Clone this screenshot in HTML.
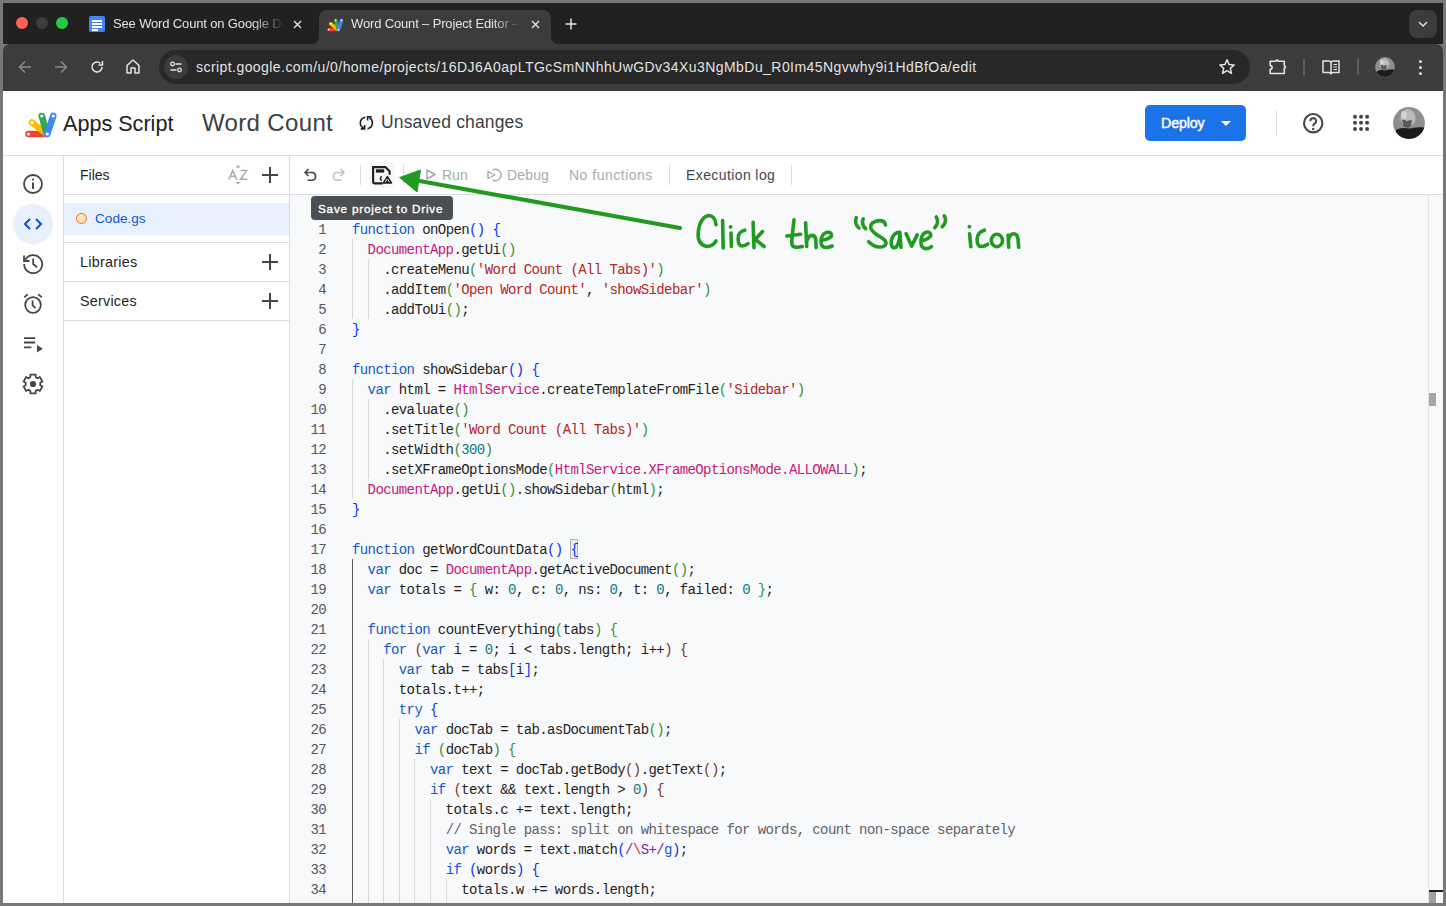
<!DOCTYPE html>
<html><head><meta charset="utf-8">
<style>
*{box-sizing:border-box;margin:0;padding:0}
html,body{width:1446px;height:906px;overflow:hidden;background:#797777;font-family:"Liberation Sans",sans-serif;position:relative}
.a{position:absolute}
.t{position:absolute;white-space:nowrap;line-height:1}
svg{position:absolute;overflow:visible}
.code{font-family:"Liberation Mono",monospace;font-size:14px;letter-spacing:-0.6px;color:#1f1f1f}
.ln{position:absolute;width:40px;text-align:right;color:#55585c;line-height:20px;padding-top:1px}
.row{position:absolute;left:352px;white-space:pre;line-height:20px;padding-top:1px}
.k{color:#1557c9}
.c{color:#c4187c}
.s{color:#b3261e}
.n{color:#0b7a85}
.b1{color:#0431fa}
.b2{color:#319331}
.b3{color:#7b3814}
.cm{color:#5f6368}
.rx{color:#7b1fb0}
.rs{color:#d1242f}
.g{position:absolute;width:1px;background:#d9d9d9}
.ga{background:#5b5b5b}
</style></head><body>
<!-- CHROME -->
<div class="a" style="left:3px;top:3px;width:1440px;height:41px;background:#202121"></div>
<div class="a" style="left:3px;top:44px;width:1440px;height:47px;background:#3c3c3c;border-radius:7px 7px 0 0"></div>
<!-- traffic lights -->
<div class="a" style="left:16px;top:17px;width:12px;height:12px;border-radius:50%;background:#fe5f57"></div>
<div class="a" style="left:36px;top:17px;width:12px;height:12px;border-radius:50%;background:#3d3d3d"></div>
<div class="a" style="left:56px;top:17px;width:12px;height:12px;border-radius:50%;background:#28c840"></div>
<!-- inactive tab -->
<div class="a" style="left:89px;top:16px;width:16px;height:16px;border-radius:2px;background:#4285f4"></div>
<div class="a" style="left:92px;top:20px;width:10px;height:1.5px;background:#fff"></div>
<div class="a" style="left:92px;top:23px;width:10px;height:1.5px;background:#fff"></div>
<div class="a" style="left:92px;top:26px;width:10px;height:1.5px;background:#fff"></div>
<div class="a" style="left:92px;top:29px;width:6px;height:1.5px;background:#fff"></div>
<div class="t" style="left:113px;top:17px;font-size:13px;letter-spacing:-0.15px;color:#e3e3e3;width:172px;overflow:hidden;-webkit-mask-image:linear-gradient(90deg,#000 80%,transparent)">See Word Count on Google Docs</div>
<svg style="left:293px;top:20px" width="9" height="9" viewBox="0 0 9 9"><path d="M1 1L8 8M8 1L1 8" stroke="#e3e3e3" stroke-width="1.4"/></svg>
<!-- active tab -->
<div class="a" style="left:319px;top:10px;width:232px;height:34px;background:#3c3c3c;border-radius:8px 8px 0 0"></div>
<div class="a" style="left:311px;top:36px;width:8px;height:8px;background:radial-gradient(circle at 0 0,#202121 8px,#3c3c3c 8.5px)"></div>
<div class="a" style="left:551px;top:36px;width:8px;height:8px;background:radial-gradient(circle at 100% 0,#202121 8px,#3c3c3c 8.5px)"></div>
<svg style="left:327px;top:18px" width="17" height="14" viewBox="0 0 33 26">
 <g stroke-linecap="round" stroke-width="6.6" fill="none">
  <path d="M3.5 22H20" stroke="#ea4335"/><path d="M7 10.5L20.5 21" stroke="#fbbc04"/><path d="M16.8 4L21.5 21" stroke="#34a853"/><path d="M28.2 4L22.3 22" stroke="#4285f4"/>
 </g><g fill="#fff"><circle cx="3.5" cy="22" r="1.6"/><circle cx="7" cy="10.5" r="1.6"/><circle cx="16.8" cy="4" r="1.6"/><circle cx="28.2" cy="4" r="1.6"/><circle cx="22.3" cy="22" r="1.6"/></g></svg>
<div class="t" style="left:351px;top:17px;font-size:13px;letter-spacing:-0.15px;color:#e3e3e3;width:168px;overflow:hidden;-webkit-mask-image:linear-gradient(90deg,#000 85%,transparent)">Word Count – Project Editor – Apps Script</div>
<svg style="left:531px;top:20px" width="9" height="9" viewBox="0 0 9 9"><path d="M1 1L8 8M8 1L1 8" stroke="#e3e3e3" stroke-width="1.4"/></svg>
<svg style="left:565px;top:18px" width="12" height="12" viewBox="0 0 12 12"><path d="M6 0.5V11.5M0.5 6H11.5" stroke="#e3e3e3" stroke-width="1.5"/></svg>
<!-- tab search -->
<div class="a" style="left:1409px;top:10px;width:28px;height:28px;border-radius:8px;background:#3c3c3c"></div>
<svg style="left:1418px;top:21px" width="10" height="6" viewBox="0 0 10 6"><path d="M1 1L5 5L9 1" stroke="#e3e3e3" stroke-width="1.5" fill="none"/></svg>
<!-- nav -->
<svg style="left:18px;top:60px" width="14" height="14" viewBox="0 0 14 14"><path d="M13 7H1.5M7 1.5L1.5 7L7 12.5" stroke="#8a8a8a" stroke-width="1.5" fill="none"/></svg>
<svg style="left:54px;top:60px" width="14" height="14" viewBox="0 0 14 14"><path d="M1 7H12.5M7 1.5L12.5 7L7 12.5" stroke="#8a8a8a" stroke-width="1.5" fill="none"/></svg>
<svg style="left:90px;top:60px" width="14" height="14" viewBox="0 0 14 14"><path d="M12 7A5 5 0 1 1 10.5 3.4" stroke="#e3e3e3" stroke-width="1.5" fill="none"/><path d="M12.5 1V5H8.5" stroke="#e3e3e3" stroke-width="1.5" fill="none"/></svg>
<svg style="left:126px;top:59px" width="14" height="15" viewBox="0 0 14 15"><path d="M1 6.5L7 1L13 6.5V14H9V9H5V14H1Z" stroke="#e3e3e3" stroke-width="1.5" fill="none" stroke-linejoin="round"/></svg>
<!-- omnibox -->
<div class="a" style="left:159px;top:50px;width:1091px;height:34px;border-radius:17px;background:#282828"></div>
<div class="a" style="left:164px;top:55px;width:24px;height:24px;border-radius:50%;background:#3c3c3c"></div>
<svg style="left:170px;top:61px" width="12" height="12" viewBox="0 0 12 12"><circle cx="2.5" cy="3" r="1.8" stroke="#e3e3e3" stroke-width="1.3" fill="none"/><path d="M5.5 3H11.5M0.5 9H6.5" stroke="#e3e3e3" stroke-width="1.3"/><circle cx="9.5" cy="9" r="1.8" stroke="#e3e3e3" stroke-width="1.3" fill="none"/></svg>
<div class="t" style="left:196px;top:60px;font-size:14px;letter-spacing:0.44px;color:#e3e3e3">script.google.com/u/0/home/projects/16DJ6A0apLTGcSmNNhhUwGDv34Xu3NgMbDu_R0Im45Ngvwhy9i1HdBfOa/edit</div>
<svg style="left:1218px;top:58px" width="18" height="18" viewBox="0 0 18 18"><path d="M9 1.8L11.1 6.6L16.2 7L12.3 10.4L13.5 15.4L9 12.7L4.5 15.4L5.7 10.4L1.8 7L6.9 6.6Z" stroke="#e3e3e3" stroke-width="1.5" fill="none" stroke-linejoin="round"/></svg>
<!-- right toolbar icons -->
<svg style="left:1268px;top:56px" width="20" height="20" viewBox="0 0 20 20"><path d="M2.2 5.2H7.9A1.1 1.1 0 0 1 10.1 5.2H16.3V9.8A1.1 1.1 0 0 1 16.3 12H16.3V17.5H2.2V13.4A1.9 1.9 0 0 0 2.2 9.6Z" stroke="#e3e3e3" stroke-width="1.6" fill="none" stroke-linejoin="round"/></svg>
<div class="a" style="left:1303px;top:59px;width:2px;height:16px;background:#5e5e5e"></div>
<svg style="left:1322px;top:59px" width="18" height="16" viewBox="0 0 18 16"><path d="M1 2H6.5Q9 2 9 4V15Q9 13.5 6.5 13.5H1ZM17 2H11.5Q9 2 9 4V15Q9 13.5 11.5 13.5H17Z" stroke="#e3e3e3" stroke-width="1.5" fill="none" stroke-linejoin="round"/><path d="M11.5 5.5H15M11.5 8H15M11.5 10.5H15" stroke="#e3e3e3" stroke-width="1.2"/></svg>
<div class="a" style="left:1357px;top:59px;width:2px;height:16px;background:#5e5e5e"></div>
<svg style="left:1375px;top:57px" width="20" height="20" viewBox="0 0 32 32"><defs><clipPath id="av2"><circle cx="16" cy="16" r="15.9"/></clipPath></defs><g clip-path="url(#av2)"><rect width="32" height="32" fill="#8e8e8e"/><ellipse cx="15" cy="11" rx="7.5" ry="9" fill="#b9b9b9"/><path d="M9 13C11 12.5 13 13.5 14 14.5C15 13.5 17 13 19 13.5L18 19C16 21 12 21 10.5 19Z" fill="#5a5a5a"/><ellipse cx="11" cy="8" rx="3" ry="4" fill="#d2d2d2"/><path d="M3 23C8 20 13 21 16 21.5C20 21 25 19.5 31 20.5V33H3Z" fill="#1b1b1b"/></g></svg>
<div class="a" style="left:1419px;top:60px;width:3px;height:3px;border-radius:50%;background:#e3e3e3"></div>
<div class="a" style="left:1419px;top:66px;width:3px;height:3px;border-radius:50%;background:#e3e3e3"></div>
<div class="a" style="left:1419px;top:72px;width:3px;height:3px;border-radius:50%;background:#e3e3e3"></div>

<!-- PAGE -->
<div class="a" style="left:3px;top:91px;width:1440px;height:812px;background:#fff"></div>

<!-- app header -->
<svg style="left:25px;top:112px" width="33" height="26" viewBox="0 0 33 26">
 <g stroke-linecap="round" stroke-width="6.6" fill="none">
  <path d="M3.5 22H20" stroke="#ea4335"/>
  <path d="M7 10.5L20.5 21" stroke="#fbbc04"/>
  <path d="M16.8 4L21.5 21" stroke="#34a853"/>
  <path d="M28.2 4L22.3 22" stroke="#4285f4"/>
 </g>
 <g fill="#fff"><circle cx="3.5" cy="22" r="1.6"/><circle cx="7" cy="10.5" r="1.6"/><circle cx="16.8" cy="4" r="1.6"/><circle cx="28.2" cy="4" r="1.6"/><circle cx="22.3" cy="22" r="1.6"/></g>
</svg>
<div class="t" style="left:63px;top:113px;font-size:21.6px;color:#202124">Apps Script</div>
<div class="t" style="left:202px;top:111px;font-size:24px;letter-spacing:0.35px;color:#3c4043">Word Count</div>
<svg style="left:359px;top:115px" width="15" height="15" viewBox="0 0 15 15"><g stroke="#1f1f1f" stroke-width="1.6" fill="none"><path d="M6.2 2.3C3.2 3.1 1.3 5.4 1.3 8C1.3 10.3 2.7 12.3 4.9 13.3"/><path d="M5.6 10.1V13.9H1.8"/><path d="M8.5 13.8C11.5 13 13.4 10.6 13.4 8C13.4 5.8 12.2 3.8 10.4 2.8"/><path d="M8.6 5.5V1.7H12.8"/></g></svg>
<div class="t" style="left:381px;top:114px;font-size:17.5px;letter-spacing:0.15px;color:#3c4043">Unsaved changes</div>
<div class="a" style="left:1145px;top:105px;width:101px;height:36px;border-radius:5px;background:#1a73e8"></div>
<div class="t" style="left:1161px;top:116px;font-size:14.2px;font-weight:400;-webkit-text-stroke:0.45px #fff;letter-spacing:-0.1px;color:#fff">Deploy</div>
<svg style="left:1221px;top:121px" width="10" height="5" viewBox="0 0 10 5"><path d="M0 0H10L5 5Z" fill="#fff"/></svg>
<div class="a" style="left:1276px;top:110px;width:1px;height:26px;background:#dadce0"></div>
<svg style="left:1303px;top:113px" width="21" height="21" viewBox="0 0 21 21"><circle cx="10.2" cy="10.2" r="9.2" stroke="#444746" stroke-width="2.1" fill="none"/><path d="M7.3 8.2A2.9 2.9 0 1 1 11.6 10.6C10.6 11.3 10.2 11.9 10.2 13.3" stroke="#444746" stroke-width="2" fill="none"/><circle cx="10.2" cy="15.9" r="1.25" fill="#444746"/></svg>
<svg style="left:1352px;top:114px" width="18" height="18" viewBox="0 0 18 18" fill="#444746"><circle cx="3.00" cy="2.80" r="2"/><circle cx="9.05" cy="2.80" r="2"/><circle cx="15.10" cy="2.80" r="2"/><circle cx="3.00" cy="8.85" r="2"/><circle cx="9.05" cy="8.85" r="2"/><circle cx="15.10" cy="8.85" r="2"/><circle cx="3.00" cy="14.90" r="2"/><circle cx="9.05" cy="14.90" r="2"/><circle cx="15.10" cy="14.90" r="2"/></svg>
<svg style="left:1393px;top:107px" width="32" height="32" viewBox="0 0 32 32"><defs><clipPath id="av"><circle cx="16" cy="16" r="15.9"/></clipPath></defs><g clip-path="url(#av)"><rect width="32" height="32" fill="#8e8e8e"/><ellipse cx="15" cy="11" rx="7.5" ry="9" fill="#b9b9b9"/><path d="M9 13C11 12.5 13 13.5 14 14.5C15 13.5 17 13 19 13.5L18 19C16 21 12 21 10.5 19Z" fill="#5a5a5a"/><ellipse cx="11" cy="8" rx="3" ry="4" fill="#d2d2d2"/><path d="M3 23C8 20 13 21 16 21.5C20 21 25 19.5 31 20.5V33H3Z" fill="#1b1b1b"/></g></svg>
<div class="a" style="left:3px;top:155px;width:1440px;height:1px;background:#dadce0"></div>


<!-- left rail -->
<div class="a" style="left:63px;top:156px;width:1px;height:747px;background:#dadce0"></div>
<svg style="left:23px;top:174px" width="20" height="20" viewBox="0 0 20 20"><circle cx="10" cy="10" r="9" stroke="#444746" stroke-width="1.8" fill="none"/><path d="M10 8.5V15" stroke="#444746" stroke-width="2"/><circle cx="10" cy="5.6" r="1.15" fill="#444746"/></svg>
<div class="a" style="left:13px;top:204px;width:40px;height:40px;border-radius:50%;background:#e8f0fe"></div>
<svg style="left:23px;top:218px" width="20" height="12" viewBox="0 0 20 12"><path d="M7 1L2 6L7 11M13 1L18 6L13 11" stroke="#0b57d0" stroke-width="2.1" fill="none"/></svg>
<svg style="left:22px;top:253px" width="22" height="21" viewBox="0 0 22 21"><path d="M3.3 6.8A9 9 0 1 1 2.2 11" stroke="#444746" stroke-width="1.8" fill="none"/><path d="M2 2.5V8H7.5" stroke="#444746" stroke-width="1.8" fill="none" stroke-linejoin="miter"/><path d="M11.2 5.5V11L15 14.3" stroke="#444746" stroke-width="1.8" fill="none"/></svg>
<svg style="left:23px;top:293px" width="20" height="21" viewBox="0 0 20 21"><circle cx="10" cy="12" r="7.8" stroke="#444746" stroke-width="1.8" fill="none"/><path d="M9.6 7.5V12.4L12.5 15" stroke="#444746" stroke-width="1.8" fill="none"/><path d="M1.2 4.2L4.8 1.4M18.8 4.2L15.2 1.4" stroke="#444746" stroke-width="1.8"/></svg>
<svg style="left:24px;top:337px" width="19" height="16" viewBox="0 0 19 16"><path d="M0 1.2H11.2M0 5.5H11.2M0 10.3H7.4" stroke="#444746" stroke-width="1.8"/><path d="M13 8L18.8 11.8L13 15.6Z" fill="#444746"/></svg>
<svg style="left:22px;top:373px" width="22" height="22" viewBox="0 0 22 22"><path d="M8.35 4.10L8.35 1.60L13.65 1.60L13.65 4.10L15.65 5.26L17.82 4.01L20.47 8.59L18.30 9.84L18.30 12.16L20.47 13.41L17.82 17.99L15.65 16.74L13.65 17.90L13.65 20.40L8.35 20.40L8.35 17.90L6.35 16.74L4.18 17.99L1.53 13.41L3.70 12.16L3.70 9.84L1.53 8.59L4.18 4.01L6.35 5.26Z" stroke="#444746" stroke-width="1.8" fill="none" stroke-linejoin="round"/><circle cx="11" cy="11" r="3.1" fill="#444746"/></svg>


<!-- files panel -->
<div class="a" style="left:289px;top:156px;width:1px;height:747px;background:#dadce0"></div>
<div class="t" style="left:80px;top:168px;font-size:14px;color:#1f1f1f">Files</div>
<svg style="left:0;top:0" width="1" height="1"><path d="M228.7 179.8L232.7 170.4L236.7 179.8M230.2 176.3H235.2M240.4 170.6H246.8L240.4 179.3H247.2" stroke="#a9adb3" stroke-width="1.5" fill="none"/><path d="M235.3 167.6L238 165L240.7 167.6ZM235.3 182L238 184.6L240.7 182Z" fill="#a9adb3"/></svg>
<svg style="left:262px;top:167px" width="16" height="16" viewBox="0 0 16 16"><path d="M8 0V16M0 8H16" stroke="#444746" stroke-width="2"/></svg>
<div class="a" style="left:64px;top:194px;width:225px;height:1px;background:#dadce0"></div>
<div class="a" style="left:64px;top:203px;width:225px;height:32px;background:#e8f0fe"></div>
<div class="a" style="left:76px;top:213px;width:11px;height:11px;border-radius:50%;background:#fde3cf;border:1.8px solid #e8710a"></div>
<div class="t" style="left:95px;top:212px;font-size:13.6px;color:#0b57d0">Code.gs</div>
<div class="a" style="left:64px;top:242px;width:225px;height:1px;background:#dadce0"></div>
<div class="t" style="left:80px;top:255px;font-size:14.4px;letter-spacing:0.25px;color:#1f1f1f">Libraries</div>
<svg style="left:262px;top:254px" width="16" height="16" viewBox="0 0 16 16"><path d="M8 0V16M0 8H16" stroke="#444746" stroke-width="2"/></svg>
<div class="a" style="left:64px;top:281px;width:225px;height:1px;background:#dadce0"></div>
<div class="t" style="left:80px;top:294px;font-size:14.4px;letter-spacing:0.2px;color:#1f1f1f">Services</div>
<svg style="left:262px;top:293px" width="16" height="16" viewBox="0 0 16 16"><path d="M8 0V16M0 8H16" stroke="#444746" stroke-width="2"/></svg>
<div class="a" style="left:64px;top:320px;width:225px;height:1px;background:#dadce0"></div>


<!-- editor toolbar -->
<div class="a" style="left:290px;top:194px;width:1153px;height:1px;background:#dadce0"></div>
<svg style="left:304px;top:168px" width="14" height="13" viewBox="0 0 14 13"><path d="M4.5 1L1 4.5L4.5 8M1.2 4.5H8.5A4 4 0 0 1 8.5 12.3H3.5" stroke="#444746" stroke-width="1.6" fill="none"/></svg>
<svg style="left:331px;top:168px" width="14" height="13" viewBox="0 0 14 13"><path d="M9.5 1L13 4.5L9.5 8M12.8 4.5H5.5A4 4 0 0 0 5.5 12.3H10.5" stroke="#bfc2c6" stroke-width="1.6" fill="none"/></svg>
<div class="a" style="left:360px;top:165px;width:1px;height:20px;background:#dadce0"></div>
<div class="a" style="left:369px;top:162px;width:26px;height:26px;border-radius:4px;background:#f6f7f8"></div>
<svg style="left:372px;top:166px" width="20" height="19" viewBox="0 0 20 19"><path d="M10.8 17.4H2.4A1.3 1.3 0 0 1 1.1 16.1V1.1H13.4L17.6 5.3V8.8" stroke="#1f1f1f" stroke-width="2.1" fill="none" stroke-linejoin="miter"/><rect x="3.9" y="3.3" width="8.3" height="3.3" fill="#1f1f1f"/><path d="M9.6 10.2A3.3 3.3 0 0 0 9.6 14.7A2.6 2.6 0 0 1 9.6 10.2Z" fill="#1f1f1f" stroke="#1f1f1f" stroke-width="1.2"/><path d="M15.4 10.6L19.4 16.9H11.4Z" stroke="#1f1f1f" stroke-width="1.6" fill="#fff" stroke-linejoin="round"/><path d="M15.4 13.3L16.9 15.9H13.9Z" fill="#1f1f1f"/></svg>
<div class="a" style="left:403px;top:165px;width:1px;height:20px;background:#dadce0"></div>
<svg style="left:426px;top:169px" width="10" height="11" viewBox="0 0 10 11"><path d="M1 1L9 5.5L1 10Z" stroke="#a8abae" stroke-width="1.5" fill="none" stroke-linejoin="round"/></svg>
<div class="t" style="left:442px;top:168px;font-size:14px;color:#a8abae">Run</div>
<svg style="left:487px;top:168px" width="15" height="14" viewBox="0 0 15 14"><path d="M5.5 2.2A5.6 5.6 0 1 1 5.5 11.8" stroke="#a8abae" stroke-width="1.5" fill="none"/><path d="M1 3.5L7.8 7L1 10.5Z" stroke="#a8abae" stroke-width="1.4" fill="none" stroke-linejoin="round"/></svg>
<div class="t" style="left:507px;top:168px;font-size:14px;letter-spacing:0.15px;color:#a8abae">Debug</div>
<div class="t" style="left:569px;top:168px;font-size:14px;letter-spacing:0.5px;color:#a8abae">No functions</div>
<div class="a" style="left:669px;top:165px;width:1px;height:20px;background:#dadce0"></div>
<div class="t" style="left:686px;top:168px;font-size:14px;letter-spacing:0.4px;color:#444746">Execution log</div>
<div class="a" style="left:791px;top:165px;width:1px;height:20px;background:#dadce0"></div>


<!-- editor -->
<div class="a" style="left:290px;top:195px;width:1153px;height:708px;background:#f8f9fa"></div>
<div class="a" style="left:1428px;top:195px;width:1px;height:708px;background:#e3e3e3"></div>
<div class="a" style="left:1442px;top:195px;width:1px;height:708px;background:#fff"></div>
<div class="a" style="left:1429px;top:393px;width:7px;height:13px;background:#a6a6a6"></div>
<div class="a" style="left:1429px;top:890px;width:14px;height:2px;background:#1f1f1f"></div>
<div class="a" style="left:1429px;top:892px;width:7px;height:11px;background:#a0a0a0"></div>
<div class="a" style="left:570px;top:539px;width:8px;height:20px;border:1px solid #b4b4b4;background:#e6eee6"></div>
<div class="code">
<div class="g" style="left:352.0px;top:239px;height:80px"></div>
<div class="g" style="left:367.6px;top:259px;height:60px"></div>
<div class="g" style="left:352.0px;top:379px;height:120px"></div>
<div class="g" style="left:367.6px;top:399px;height:80px"></div>
<div class="g ga" style="left:352.0px;top:559px;height:344px"></div>
<div class="g" style="left:367.6px;top:639px;height:264px"></div>
<div class="g" style="left:383.2px;top:659px;height:244px"></div>
<div class="g" style="left:398.8px;top:719px;height:184px"></div>
<div class="g" style="left:414.4px;top:759px;height:144px"></div>
<div class="g" style="left:430.0px;top:799px;height:104px"></div>
<div class="g" style="left:445.6px;top:879px;height:24px"></div>
<div class="ln" style="left:286px;top:219px">1</div>
<div class="row" style="top:219px"><span class="k">function</span> onOpen<span class="b1">()</span> <span class="b1">{</span></div>
<div class="ln" style="left:286px;top:239px">2</div>
<div class="row" style="top:239px">  <span class="c">DocumentApp</span>.getUi<span class="b2">()</span></div>
<div class="ln" style="left:286px;top:259px">3</div>
<div class="row" style="top:259px">    .createMenu<span class="b2">(</span><span class="s">&#x27;Word Count (All Tabs)&#x27;</span><span class="b2">)</span></div>
<div class="ln" style="left:286px;top:279px">4</div>
<div class="row" style="top:279px">    .addItem<span class="b2">(</span><span class="s">&#x27;Open Word Count&#x27;</span>, <span class="s">&#x27;showSidebar&#x27;</span><span class="b2">)</span></div>
<div class="ln" style="left:286px;top:299px">5</div>
<div class="row" style="top:299px">    .addToUi<span class="b2">()</span>;</div>
<div class="ln" style="left:286px;top:319px">6</div>
<div class="row" style="top:319px"><span class="b1">}</span></div>
<div class="ln" style="left:286px;top:339px">7</div>
<div class="row" style="top:339px"></div>
<div class="ln" style="left:286px;top:359px">8</div>
<div class="row" style="top:359px"><span class="k">function</span> showSidebar<span class="b1">()</span> <span class="b1">{</span></div>
<div class="ln" style="left:286px;top:379px">9</div>
<div class="row" style="top:379px">  <span class="k">var</span> html = <span class="c">HtmlService</span>.createTemplateFromFile<span class="b2">(</span><span class="s">&#x27;Sidebar&#x27;</span><span class="b2">)</span></div>
<div class="ln" style="left:286px;top:399px">10</div>
<div class="row" style="top:399px">    .evaluate<span class="b2">()</span></div>
<div class="ln" style="left:286px;top:419px">11</div>
<div class="row" style="top:419px">    .setTitle<span class="b2">(</span><span class="s">&#x27;Word Count (All Tabs)&#x27;</span><span class="b2">)</span></div>
<div class="ln" style="left:286px;top:439px">12</div>
<div class="row" style="top:439px">    .setWidth<span class="b2">(</span><span class="n">300</span><span class="b2">)</span></div>
<div class="ln" style="left:286px;top:459px">13</div>
<div class="row" style="top:459px">    .setXFrameOptionsMode<span class="b2">(</span><span class="c">HtmlService.XFrameOptionsMode.ALLOWALL</span><span class="b2">)</span>;</div>
<div class="ln" style="left:286px;top:479px">14</div>
<div class="row" style="top:479px">  <span class="c">DocumentApp</span>.getUi<span class="b2">()</span>.showSidebar<span class="b2">(</span>html<span class="b2">)</span>;</div>
<div class="ln" style="left:286px;top:499px">15</div>
<div class="row" style="top:499px"><span class="b1">}</span></div>
<div class="ln" style="left:286px;top:519px">16</div>
<div class="row" style="top:519px"></div>
<div class="ln" style="left:286px;top:539px">17</div>
<div class="row" style="top:539px"><span class="k">function</span> getWordCountData<span class="b1">()</span> <span class="b1 bm">{</span></div>
<div class="ln" style="left:286px;top:559px">18</div>
<div class="row" style="top:559px">  <span class="k">var</span> doc = <span class="c">DocumentApp</span>.getActiveDocument<span class="b2">()</span>;</div>
<div class="ln" style="left:286px;top:579px">19</div>
<div class="row" style="top:579px">  <span class="k">var</span> totals = <span class="b2">{</span> w: <span class="n">0</span>, c: <span class="n">0</span>, ns: <span class="n">0</span>, t: <span class="n">0</span>, failed: <span class="n">0</span> <span class="b2">}</span>;</div>
<div class="ln" style="left:286px;top:599px">20</div>
<div class="row" style="top:599px"></div>
<div class="ln" style="left:286px;top:619px">21</div>
<div class="row" style="top:619px">  <span class="k">function</span> countEverything<span class="b2">(</span>tabs<span class="b2">)</span> <span class="b2">{</span></div>
<div class="ln" style="left:286px;top:639px">22</div>
<div class="row" style="top:639px">    <span class="k">for</span> <span class="b3">(</span><span class="k">var</span> i = <span class="n">0</span>; i &lt; tabs.length; i++<span class="b3">)</span> <span class="b3">{</span></div>
<div class="ln" style="left:286px;top:659px">23</div>
<div class="row" style="top:659px">      <span class="k">var</span> tab = tabs<span class="b1">[</span>i<span class="b1">]</span>;</div>
<div class="ln" style="left:286px;top:679px">24</div>
<div class="row" style="top:679px">      totals.t++;</div>
<div class="ln" style="left:286px;top:699px">25</div>
<div class="row" style="top:699px">      <span class="k">try</span> <span class="b1">{</span></div>
<div class="ln" style="left:286px;top:719px">26</div>
<div class="row" style="top:719px">        <span class="k">var</span> docTab = tab.asDocumentTab<span class="b2">()</span>;</div>
<div class="ln" style="left:286px;top:739px">27</div>
<div class="row" style="top:739px">        <span class="k">if</span> <span class="b2">(</span>docTab<span class="b2">)</span> <span class="b2">{</span></div>
<div class="ln" style="left:286px;top:759px">28</div>
<div class="row" style="top:759px">          <span class="k">var</span> text = docTab.getBody<span class="b3">()</span>.getText<span class="b3">()</span>;</div>
<div class="ln" style="left:286px;top:779px">29</div>
<div class="row" style="top:779px">          <span class="k">if</span> <span class="b3">(</span>text &amp;&amp; text.length &gt; <span class="n">0</span><span class="b3">)</span> <span class="b3">{</span></div>
<div class="ln" style="left:286px;top:799px">30</div>
<div class="row" style="top:799px">            totals.c += text.length;</div>
<div class="ln" style="left:286px;top:819px">31</div>
<div class="row" style="top:819px">            <span class="cm">// Single pass: split on whitespace for words, count non-space separately</span></div>
<div class="ln" style="left:286px;top:839px">32</div>
<div class="row" style="top:839px">            <span class="k">var</span> words = text.match<span class="b1">(</span><span class="rx">/</span><span class="rs">\</span><span class="rx">S+/</span><span class="k">g</span><span class="b1">)</span>;</div>
<div class="ln" style="left:286px;top:859px">33</div>
<div class="row" style="top:859px">            <span class="k">if</span> <span class="b1">(</span>words<span class="b1">)</span> <span class="b1">{</span></div>
<div class="ln" style="left:286px;top:879px">34</div>
<div class="row" style="top:879px">              totals.w += words.length;</div>

</div>


<!-- tooltip -->
<div class="a" style="left:311px;top:196px;width:142px;height:24px;border-radius:4px;background:#4b4e52"></div>
<div class="t" style="left:318px;top:202.5px;font-size:11.7px;font-weight:400;-webkit-text-stroke:0.35px #fff;letter-spacing:0.8px;color:#fff">Save project to Drive</div>
<!-- arrow & handwriting -->
<svg style="left:0;top:0" width="1" height="1">
 <path d="M680 228L414 180" stroke="#229a22" stroke-width="4.2" stroke-linecap="round"/>
 <path d="M399.6 177.5L420.5 170L417 192Z" fill="#229a22" stroke="#229a22" stroke-width="1" stroke-linejoin="round"/>
 <g stroke="#229a22" stroke-width="3.6" fill="none" stroke-linecap="round" stroke-linejoin="round">
  <path d="M716 224.7C715.5 219 712.5 215.5 708.8 215.5C704 215.8 699.3 222 698.3 231.6C697.6 238 699 244.5 706 246.2C710 247 714 244.5 716 241"/>
  <path d="M722.6 220.5L723.2 248"/>
  <path d="M731 233L731.4 246.5"/>
  <path d="M744.8 230.2C740.5 231 738 234.5 738.1 238.5C738.2 243.5 739.5 246 742 246C744.5 246 746.5 245 748.1 243.7"/>
  <path d="M753.1 222.2L754 247.6M762.5 231.6L755.3 239.3L764.1 246.5"/>
  <path d="M794 219.9C793 228 792 236 791.8 243C791.8 247.5 796 248 802.3 246.6M786.8 236L800.6 234.3"/>
  <path d="M805.6 222.7L806.7 246.5M807 240.4C808.5 237 810 235.4 811.7 235.4C814.5 235.4 815.6 237 815.8 240L816.1 247.6"/>
  <path d="M821.3 240.6C825 239.8 830 238.5 831.5 236C832 233 829.5 231.8 827 232.3C823 233.2 821 237.5 821 241.5C821 245.5 823 247.5 826 247.5C828.5 247.5 830.5 246.8 832.2 246"/>
  <path d="M856.3 217.6C855 220.5 855.5 225 859 228M863.2 218.8C861.8 221.5 862.5 226 865.6 228.7"/>
  <path d="M885.5 224.9C885 221.5 882.5 220.4 879 220.6C874 220.8 870.5 223.5 870.7 227.4C871 231 874.5 233 878 235.5C883 238.8 886.5 240.5 886 243.5C885.5 246.5 882 247.2 878.5 247C874 246.5 871 244 868.7 241.7"/>
  <path d="M899.2 232.2C894.5 232.5 891.5 237 891.2 242C891 246 892.5 247.9 894.5 247.8C897.5 247.6 899.6 241 899.8 233.5M899.8 232.4L901 247.3"/>
  <path d="M906 233.6L911.6 246.1L917.2 234.9"/>
  <path d="M921.2 241C925.5 240 929.5 238.5 930.8 235.5C931 232.5 928.5 231.5 926 232.2C922.5 233.5 920.8 238 920.9 242C921 246.5 923 248.6 926 248.6C928.5 248.6 930.5 247.5 931.5 246.7"/>
  <path d="M936.2 217C937.8 219.5 938.5 224 934.8 227.8M944.2 215.8C946 218.5 946.5 222.5 942.2 226.8"/>
  <path d="M969.6 233.8L970.8 246.7"/>
  <path d="M984.4 230.2C980 231.5 977.3 234.5 977.1 239C977 244 978.5 246.5 981 246.5C983.5 246.5 985.8 245.5 987.6 244.2"/>
  <ellipse cx="996.9" cy="240.5" rx="5.6" ry="6.2"/>
  <path d="M1008.1 235L1008.7 247.3M1008.7 238.8C1010 235.5 1011.5 233.8 1013.3 233.8C1016.5 233.8 1017.8 236 1018 239.5L1018.7 247.3"/>
 </g>
 <g fill="#229a22"><circle cx="730.6" cy="226.9" r="1.9"/><circle cx="969.4" cy="226.7" r="1.9"/></g>
</svg>

</body></html>
